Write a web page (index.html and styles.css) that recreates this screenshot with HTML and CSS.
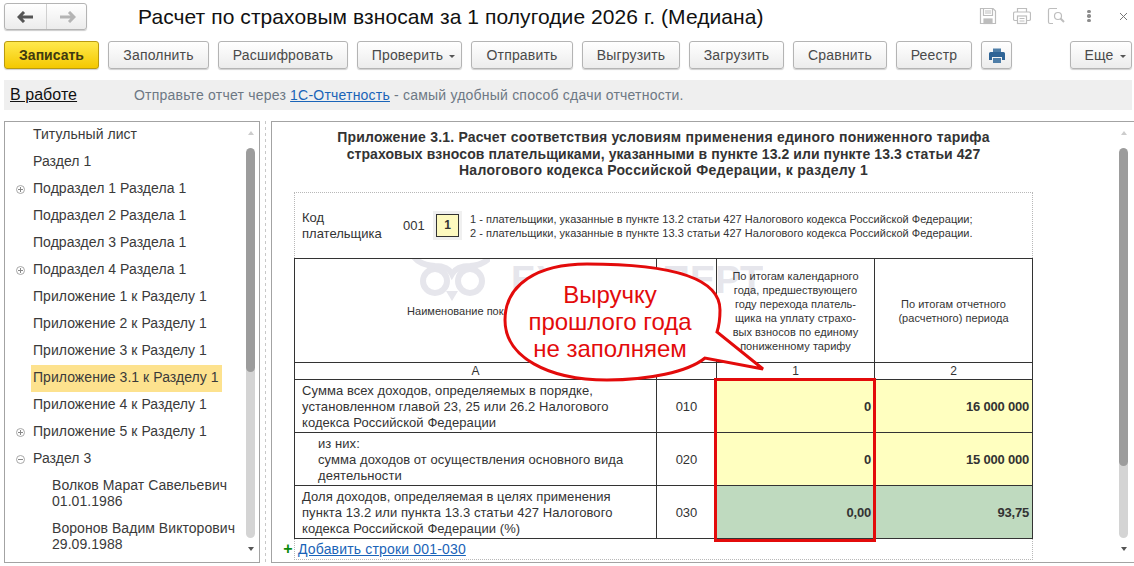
FILE: index.html
```html
<!DOCTYPE html>
<html lang="ru">
<head>
<meta charset="utf-8">
<title>Расчет по страховым взносам</title>
<link rel="stylesheet" href="styles.css">
</head>
<body>
<div class="page">
  <header class="titlebar">
    <div class="nav">
      <button class="nav-btn">
        <svg width="18" height="12" viewBox="0 0 18 12"><path d="M7 1 L2 6 L7 11 M2 6 H16" fill="none" stroke="#555" stroke-width="3"/></svg>
      </button>
      <button class="nav-btn">
        <svg width="18" height="12" viewBox="0 0 18 12"><path d="M11 1 L16 6 L11 11 M16 6 H2" fill="none" stroke="#b4b4b4" stroke-width="3"/></svg>
      </button>
    </div>
    <h1 class="title">Расчет по страховым взносам за 1 полугодие 2026 г. (Медиана)</h1>
    <div class="win-icons">
      <svg width="18" height="18" viewBox="0 0 18 18" fill="none" stroke="#bdbdbd" stroke-width="1.2"><path d="M1.5 1.5 H14 L16.5 4 V16.5 H1.5 Z"/><path d="M4.5 1.5 V8.5 H13.5 V1.5 M6 4 H12 M6 6 H12" /><rect x="5" y="12" width="8" height="4.5" fill="#bdbdbd"/></svg>
      <svg width="18" height="18" viewBox="0 0 18 18" fill="none" stroke="#bdbdbd" stroke-width="1.2"><path d="M4.5 5 V1.5 H13.5 V5"/><rect x="0.5" y="5" width="17" height="8.5" rx="1.5"/><rect x="4.5" y="9" width="9" height="7.5" fill="#fff"/><path d="M6.5 11.5 H11.5 M6.5 14 H11.5"/></svg>
      <svg width="18" height="18" viewBox="0 0 18 18" fill="none" stroke="#bdbdbd" stroke-width="1.2"><path d="M10 1.5 H3 Q1.5 1.5 1.5 3 V15 Q1.5 16.5 3 16.5 H6"/><circle cx="11" cy="9" r="3.5"/><path d="M13.5 11.5 L17 15" stroke-width="2"/></svg>
      <span class="dots"><i></i><i></i><i></i></span>
      <svg class="close" width="9" height="9" viewBox="0 0 9 9"><path d="M1 1 L8 8 M8 1 L1 8" stroke="#777" fill="none"/></svg>
    </div>
  </header>

  <nav class="toolbar">
    <button class="btn primary w95">Записать</button>
    <button class="btn w101">Заполнить</button>
    <button class="btn w130">Расшифровать</button>
    <button class="btn w105 has-caret">Проверить<span class="caret"></span></button>
    <button class="btn w102">Отправить</button>
    <button class="btn w98">Выгрузить</button>
    <button class="btn w95">Загрузить</button>
    <button class="btn w94">Сравнить</button>
    <button class="btn w76">Реестр</button>
    <button class="btn w31">
      <svg width="16" height="15" viewBox="0 0 16 15"><path d="M4 5 V0.5 H12 V5 Z" fill="#4f7ea8"/><path d="M1.5 4 H14.5 Q16 4 16 5.5 V12 H13 V9 H3 V12 H0 V5.5 Q0 4 1.5 4 Z" fill="#2f6496"/><rect x="4" y="10" width="8" height="5" fill="#4f7ea8"/></svg>
    </button>
    <button class="btn w62 more has-caret">Еще<span class="caret"></span></button>
  </nav>

  <div class="status">
    <a class="state">В работе</a>
    <span class="hint">Отправьте отчет через <a class="link">1С-Отчетность</a> - самый удобный способ сдачи отчетности.</span>
  </div>

  <main class="panes">
    <aside class="pane tree">
      <ul class="tree-list">
        <li class="row"><span class="label">Титульный лист</span></li>
        <li class="row"><span class="label">Раздел 1</span></li>
        <li class="row"><span class="tog plus"></span><span class="label">Подраздел 1 Раздела 1</span></li>
        <li class="row"><span class="label">Подраздел 2 Раздела 1</span></li>
        <li class="row"><span class="label">Подраздел 3 Раздела 1</span></li>
        <li class="row"><span class="tog plus"></span><span class="label">Подраздел 4 Раздела 1</span></li>
        <li class="row"><span class="label">Приложение 1 к Разделу 1</span></li>
        <li class="row"><span class="label">Приложение 2 к Разделу 1</span></li>
        <li class="row"><span class="label">Приложение 3 к Разделу 1</span></li>
        <li class="row"><span class="label selected">Приложение 3.1 к Разделу 1</span></li>
        <li class="row"><span class="label">Приложение 4 к Разделу 1</span></li>
        <li class="row"><span class="tog plus"></span><span class="label">Приложение 5 к Разделу 1</span></li>
        <li class="row"><span class="tog"></span><span class="label">Раздел 3</span></li>
        <li class="person">Волков Марат Савельевич<br>01.01.1986</li>
        <li class="person">Воронов Вадим Викторович<br>29.09.1988</li>
      </ul>
      <div class="scroll">
        <span class="arrow up faint"></span>
        <div class="track"><div class="thumb thumb-left"></div></div>
        <span class="arrow down"></span>
      </div>
    </aside>

    <div class="splitter"></div>

    <section class="pane form">
      <div class="sheet">
        <h2 class="heading">Приложение 3.1. Расчет соответствия условиям применения единого пониженного тарифа<br><span class="h-tight">страховых взносов плательщиками, указанными в пункте 13.2 или пункте 13.3 статьи 427</span><br><span class="h-wide">Налогового кодекса Российской Федерации, к разделу 1</span></h2>
        <div class="frame">
          <div class="code">
            <div class="code-label">Код<br>плательщика</div>
            <div class="code-num">001</div>
            <div class="code-wrap"><div class="code-box">1</div></div>
            <div class="code-note">1 - плательщики, указанные в пункте 13.2 статьи 427 Налогового кодекса Российской Федерации;<br>2 - плательщики, указанные в пункте 13.3 статьи 427 Налогового кодекса Российской Федерации.</div>
          </div>
          <div class="table-wrap">
            <table class="grid">
              <colgroup><col class="c-a"><col class="c-b"><col class="c-c"><col class="c-d"></colgroup>
              <tr class="r-head">
                <th class="th-name">Наименование показателя</th>
                <th class="th-name"></th>
                <th class="th-note">По итогам календарного<br>года, предшествующего<br>году перехода платель-<br>щика на уплату страхо-<br>вых взносов по единому<br>пониженному тарифу</th>
                <th class="th-note">По итогам отчетного<br>(расчетного) периода</th>
              </tr>
              <tr class="r-idx"><td>А</td><td></td><td>1</td><td>2</td></tr>
              <tr class="r-data">
                <td class="name">Сумма всех доходов, определяемых в порядке,<br>установленном главой 23, 25 или 26.2 Налогового<br>кодекса Российской Федерации</td>
                <td class="code-cell">010</td>
                <td class="val yellow">0</td><td class="val yellow">16 000 000</td>
              </tr>
              <tr class="r-data">
                <td class="name indent">из них:<br>сумма доходов от осуществления основного вида<br>деятельности</td>
                <td class="code-cell">020</td>
                <td class="val yellow">0</td><td class="val yellow">15 000 000</td>
              </tr>
              <tr class="r-data">
                <td class="name">Доля доходов, определяемая в целях применения<br>пункта 13.2 или пункта 13.3 статьи 427 Налогового<br>кодекса Российской Федерации (%)</td>
                <td class="code-cell">030</td>
                <td class="val green">0,00</td><td class="val green">93,75</td>
              </tr>
            </table>
            <div class="watermark">
              <svg width="80" height="44" viewBox="0 0 80 44" fill="none" stroke="#e6e6ec" stroke-width="6"><circle cx="25" cy="22" r="12"/><circle cx="60" cy="22" r="12"/><path d="M4 -2 Q10 6 25 7 Q38 7 42 15 Q47 7 60 7 Q74 6 80 -2"/><path d="M36 32 L42 42 L48 32 Z" fill="#e6e6ec" stroke="none"/></svg>
              <span class="wm-text">БУХЭКСПЕРТ</span>
            </div>
          </div>
          <div class="add-row"><span class="add-plus">+</span><a class="link">Добавить строки 001-030</a></div>
        </div>
      </div>
      <div class="scroll scroll-right">
        <span class="arrow up faint"></span>
        <div class="track"><div class="thumb thumb-right"></div></div>
        <span class="arrow down"></span>
      </div>
    </section>
  </main>

  <div class="highlight"></div>
  <div class="callout">
    <svg width="270" height="124" viewBox="0 0 270 124"><path d="M84 2 C150 2 217 10 217 48 C217 56 216 64 214 70 L260 107 L202 96 C185 110 145 118 104 118 C45 118 2 95 2 58 C2 22 35 2 84 2 Z" fill="#fff" stroke="#e30b0b" stroke-width="3"/></svg>
    <div class="callout-text">Выручку<br>прошлого года<br>не заполняем</div>
  </div>
</div>
</body>
</html>
```

FILE: styles.css
```css
* { box-sizing: border-box; }
html, body { margin: 0; padding: 0; background: #fff; }
body { font-family: "Liberation Sans", Arial, sans-serif; color: #333; overflow: hidden; }
.page { position: relative; width: 1134px; height: 566px; overflow: hidden; }

.titlebar { height: 41px; display: flex; align-items: flex-start; padding: 3px 6px 0 4px; }
.nav { display: flex; width: 83px; height: 27px; border: 1px solid #b4b4b4; border-radius: 3px; background: linear-gradient(#fff, #ececec); box-shadow: 0 1px 1px #ccc; }
.nav-btn { flex: 1; border: 0; background: none; padding: 0; display: flex; align-items: center; justify-content: center; }
.nav-btn + .nav-btn { border-left: 1px solid #d0d0d0; flex: 0 0 40px; }
.title { margin: 2px 0 0 51px; font-size: 21px; line-height: 24px; font-weight: 400; color: #111; letter-spacing: 0.08px; white-space: nowrap; flex: 1; }
.win-icons { display: flex; align-items: center; gap: 16px; margin-top: 4px; height: 18px; }
.dots { display: flex; flex-direction: column; gap: 1px; margin-left: 6.5px; }
.dots i { display: block; width: 3.5px; height: 3.5px; border-radius: 50%; background: #8c8c8c; }
.close { margin-left: 12.5px; }

.toolbar { display: flex; gap: 9px; padding: 0 2px 0 4px; height: 28px; }
.btn { height: 28px; border: 1px solid #b4b4b4; border-radius: 3px; background: linear-gradient(#fff, #ececec); box-shadow: 0 1px 1px #d0d0d0; font: 14px "Liberation Sans", Arial, sans-serif; letter-spacing: 0.18px; color: #4a4a4a; padding: 0; display: flex; align-items: center; justify-content: center; white-space: nowrap; }
.has-caret { padding-left: 8px; }
.primary { background: linear-gradient(#ffe94d, #f4c800); border-color: #b99a10; color: #3f3a10; font-weight: 700; letter-spacing: 0; }
.w95 { width: 95px; } .w101 { width: 101px; } .w130 { width: 130px; } .w105 { width: 105px; } .w102 { width: 102px; } .w98 { width: 98px; } .w94 { width: 94px; } .w76 { width: 76px; } .w31 { width: 31px; } .w62 { width: 62px; }
.more { margin-left: auto; }
.caret { width: 0; height: 0; margin-left: 6px; margin-top: 2px; border-left: 3px solid transparent; border-right: 3px solid transparent; border-top: 3px solid #555; }

.status { margin: 11px 2px 0 4px; height: 30px; background: #efefef; display: flex; align-items: center; padding-left: 6px; }
.state { width: 124px; font-size: 16px; color: #111; text-decoration: underline; letter-spacing: 0.05px; }
.hint { font-size: 14px; color: #6d7884; letter-spacing: 0.21px; }
.link { color: #1a64b8; text-decoration: underline; }

.panes { display: flex; margin-top: 11px; height: 442px; padding-left: 4px; }
.pane { border: 1px solid #a3a3a3; position: relative; display: flex; }
.tree { width: 256px; }
.splitter { width: 11px; background: linear-gradient(#c8c8c8 50%, transparent 50%) 5px 0 / 1px 6px repeat-y; }
.form { width: 863px; border-right: 0; }

.tree-list { list-style: none; margin: 0; padding: 0; width: 241px; font-size: 14px; line-height: 16px; color: #3a3a3a; letter-spacing: 0.05px; }
.row { height: 27px; display: flex; align-items: center; padding-left: 26px; position: relative; }
.label { padding: 0 3px 0 2px; height: 27px; line-height: 25px; white-space: nowrap; }
.selected { background: #fde28e; }
.tog { position: absolute; left: 11px; top: 9px; width: 9px; height: 9px; border: 1px solid #a8a8a8; border-radius: 50%; }
.tog::before { content: ""; position: absolute; left: 1px; top: 3px; width: 5px; height: 1px; background: #888; }
.plus::after { content: ""; position: absolute; left: 3px; top: 1px; width: 1px; height: 5px; background: #888; }
.person { height: 43px; padding: 4px 0 0 47px; white-space: nowrap; }

.scroll { width: 9px; margin-left: auto; margin-right: 4px; display: flex; flex-direction: column; align-items: center; height: 100%; padding-top: 9px; }
.arrow { width: 0; height: 0; border-left: 3px solid transparent; border-right: 3px solid transparent; flex: none; }
.up { border-bottom: 4px solid #555; }
.up.faint { border-bottom-color: #ccc; }
.down { border-top: 4px solid #555; margin-top: 9px; }
.track { width: 9px; height: 390px; margin-top: 13px; background: #d4d4d4; border-radius: 5px; overflow: hidden; flex: none; }
.thumb { width: 9px; background: #9c9c9c; border-radius: 5px; }
.thumb-left { height: 224px; }
.thumb-right { height: 318px; }
.scroll-right { margin-right: 6px; }

.sheet { width: 840px; padding: 0 0 0 22px; }
.heading { margin: 7px 0 0; width: 739px; height: 63px; text-align: center; font-size: 14px; line-height: 16.5px; font-weight: 700; color: #333; letter-spacing: 0.21px; white-space: nowrap; }
.h-tight { letter-spacing: 0.07px; }
.h-wide { letter-spacing: 0.29px; }
.frame { width: 739px; height: 368px; border: 1px dotted #b8b8b8; }
.code { height: 65px; display: flex; align-items: center; padding-left: 7px; font-size: 13px; }
.code-label { width: 101px; line-height: 16px; }
.code-num { width: 30px; }
.code-wrap { padding: 3px; background: #f0f0f0; width: 29px; height: 29px; margin-right: 8px; }
.code-box { width: 23px; height: 23px; border: 1px solid #333; background: #fdf9bf; text-align: center; line-height: 21px; font-size: 12px; font-weight: 700; }
.code-note { font-size: 11px; line-height: 14px; white-space: nowrap; letter-spacing: 0.02px; }

.table-wrap { position: relative; margin-left: -1px; }
.grid { border-collapse: collapse; table-layout: fixed; width: 738px; position: relative; z-index: 1; font-size: 13px; }
.c-a { width: 362px; } .c-b { width: 60px; } .c-c { width: 158px; } .c-d { width: 158px; }
.grid th, .grid td { border: 1px solid #333; padding: 0; font-weight: 400; }
.r-head { height: 104px; }
.r-idx { height: 17px; }
.r-idx td { text-align: center; font-size: 12px; line-height: 14px; }
.r-data { height: 53px; }
.grid .th-name { font-size: 11px; text-align: center; letter-spacing: 0.02px; }
.grid .th-note { font-size: 11px; line-height: 14px; text-align: center; letter-spacing: 0.04px; }
.grid .name { line-height: 16px; padding: 1px 0 0 7px; letter-spacing: 0.07px; white-space: nowrap; }
.grid .indent { padding-left: 23px; }
.code-cell { text-align: center; padding-top: 1px; }
.grid .val { text-align: right; padding: 1px 3px 0 0; font-weight: 700; letter-spacing: -0.2px; }
.yellow { background: #ffffc0; }
.green { background: #bfdabf; }
.watermark { position: absolute; left: 116px; top: 1px; height: 44px; display: flex; align-items: flex-start; z-index: 0; overflow: hidden; }
.wm-text { font-size: 38px; font-weight: 700; color: #e6e6ec; line-height: 42px; margin-left: 21px; }

.add-row { display: flex; align-items: center; height: 20px; margin-left: -14px; font-size: 14px; letter-spacing: 0.17px; }
.add-plus { width: 14px; margin-right: 3px; color: #0a8a0a; font-weight: 700; font-size: 16px; text-align: center; }

.highlight { position: absolute; left: 714px; top: 378px; width: 162px; height: 164px; border: 3px solid #e30b0b; z-index: 3; }
.callout { position: absolute; left: 503px; top: 262px; width: 270px; height: 124px; z-index: 4; }
.callout svg { position: absolute; left: 0; top: 0; }
.callout-text { position: absolute; left: 0; top: 19px; width: 214px; text-align: center; color: #e30b0b; font-size: 24px; line-height: 27px; }
```
